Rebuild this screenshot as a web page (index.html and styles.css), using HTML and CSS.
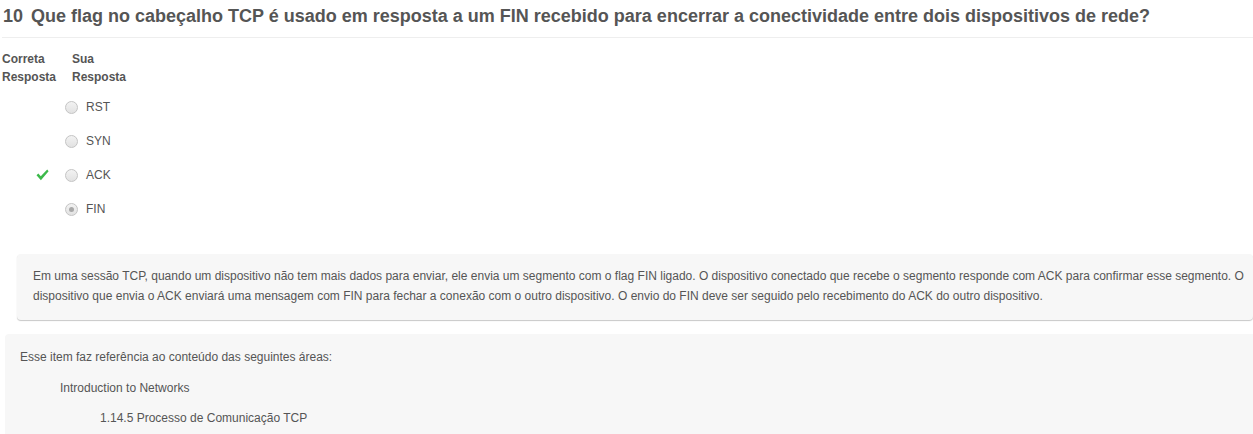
FILE: index.html
```html
<!DOCTYPE html>
<html lang="pt">
<head>
<meta charset="utf-8">
<title>Questão 10</title>
<link rel="stylesheet" href="styles.css">
</head>
<body>
<div class="question">
  <h2 class="title"><span class="num">10</span>Que flag no cabeçalho TCP é usado em resposta a um FIN recebido para encerrar a conectividade entre dois dispositivos de rede?</h2>
  <div class="head">
    <div class="col-correct">Correta<br>Resposta</div>
    <div class="col-yours">Sua<br>Resposta</div>
  </div>
  <ul class="answers">
    <li class="answer"><span class="mark"></span><span class="radio"></span><span class="label">RST</span></li>
    <li class="answer"><span class="mark"></span><span class="radio"></span><span class="label">SYN</span></li>
    <li class="answer"><span class="mark"><svg width="13" height="12" viewBox="0 0 13 12"><path d="M0.5 6.2 L2.3 4.6 L4.8 7.2 L11.2 0.6 L12.6 2.2 L4.9 11.2 Z" fill="#3cb94a"/></svg></span><span class="radio"></span><span class="label">ACK</span></li>
    <li class="answer"><span class="mark"></span><span class="radio checked"></span><span class="label">FIN</span></li>
  </ul>
  <div class="feedback">Em uma sessão TCP, quando um dispositivo não tem mais dados para enviar, ele envia um segmento com o flag FIN ligado. O dispositivo conectado que recebe o segmento responde com ACK para confirmar esse segmento. O dispositivo que envia o ACK enviará uma mensagem com FIN para fechar a conexão com o outro dispositivo. O envio do FIN deve ser seguido pelo recebimento do ACK do outro dispositivo.</div>
  <div class="refs">
    <p class="refs-intro">Esse item faz referência ao conteúdo das seguintes áreas:</p>
    <p class="refs-course">Introduction to Networks</p>
    <p class="refs-topic">1.14.5 Processo de Comunicação TCP</p>
  </div>
</div>
</body>
</html>
```

FILE: styles.css
```css
html, body {
  margin: 0;
  padding: 0;
  background: #fff;
}
body {
  font-family: "Liberation Sans", Arial, sans-serif;
  color: #555;
  font-size: 12px;
}
.title {
  margin: 0 0 0 2px;
  padding: 6px 3px 11px 1px;
  font-size: 18px;
  line-height: 20px;
  font-weight: bold;
  color: #555;
  border-bottom: 1px solid #eee;
}
.title .num {
  margin-right: 8px;
}
.head {
  display: flex;
  padding-top: 12px;
  padding-left: 2px;
  font-weight: bold;
  line-height: 18px;
  color: #555;
}
.col-correct { width: 70px; }
.col-yours { width: 70px; }
.answers {
  list-style: none;
  margin: 4px 0 0;
  padding: 0;
}
.answer {
  display: flex;
  align-items: center;
  height: 34px;
}
.mark {
  display: flex;
  align-items: center;
  margin-left: 36px;
  width: 29px;
}
.radio {
  box-sizing: border-box;
  width: 13px;
  height: 13px;
  border-radius: 50%;
  border: 1px solid #c4c4c4;
  background: linear-gradient(#f2f2f2, #e2e2e2);
  position: relative;
}
.radio.checked::after {
  content: "";
  position: absolute;
  left: 3px;
  top: 3px;
  width: 5px;
  height: 5px;
  border-radius: 50%;
  background: #a8a8a8;
}
.label {
  margin-left: 8px;
  color: #555;
  font-size: 12px;
}
.feedback {
  margin: 28px 0 0 17px;
  padding: 12px 8px 14px 16px;
  background: #f7f7f7;
  border-radius: 4px;
  box-shadow: 0 1px 1px #c8c8c8;
  line-height: 20px;
  color: #555;
}
.refs {
  margin: 14px 0 0 5px;
  padding: 13px 15px 8px;
  background: #f7f7f7;
  border-radius: 4px 0 0 0;
  line-height: 20px;
}
.refs p {
  margin: 0 0 10px;
}
.refs .refs-intro { margin-bottom: 11px; }
.refs-course { padding-left: 40px; }
.refs-topic { padding-left: 80px; }
```
